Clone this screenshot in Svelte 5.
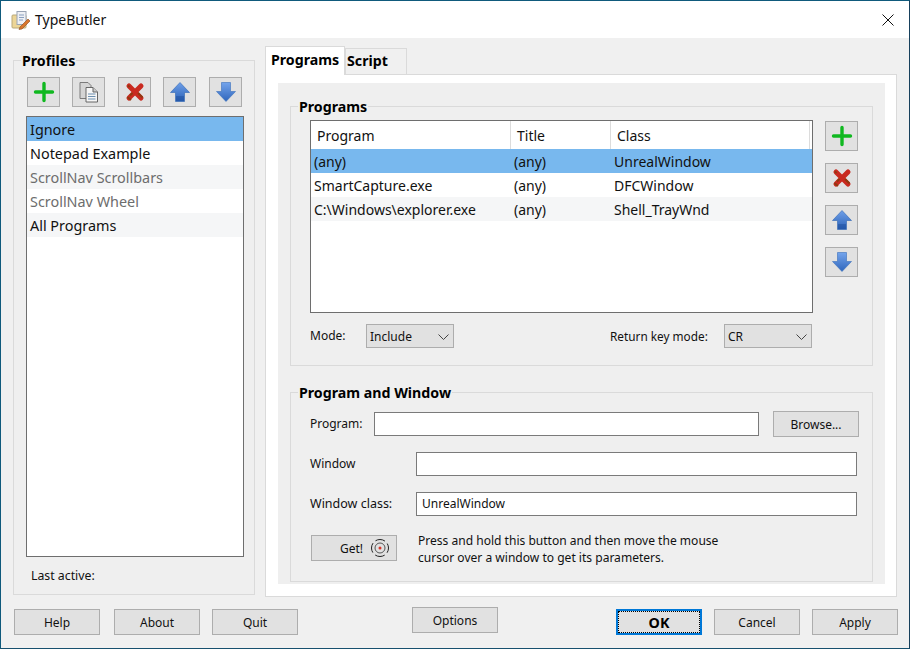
<script>
  const profiles = [
    { n: 'Ignore', c: 'sel' },
    { n: 'Notepad Example', c: '' },
    { n: 'ScrollNav Scrollbars', c: 'alt dim' },
    { n: 'ScrollNav Wheel', c: 'dim' },
    { n: 'All Programs', c: 'alt' }
  ];
  const programs = [
    { p: '(any)', t: '(any)', k: 'UnrealWindow', c: 'sel' },
    { p: 'SmartCapture.exe', t: '(any)', k: 'DFCWindow', c: '' },
    { p: 'C:\\Windows\\explorer.exe', t: '(any)', k: 'Shell_TrayWnd', c: 'alt' }
  ];
</script>

{#snippet plus()}
  <svg width="24" height="24" viewBox="0 0 24 24"><path d="M12 3.500v17M3.500 12h17" stroke="#10b820" stroke-width="3.400" stroke-linecap="round" fill="none"/></svg>
{/snippet}
{#snippet cross()}
  <svg width="24" height="24" viewBox="0 0 24 24"><path d="M6 6l12 12M18 6L6 18" stroke="#c92a20" stroke-width="5" stroke-linecap="round" fill="none"/><path d="M4.500 17l3.500 3M15 13l4.500 4.500M9.500 13l-2.500 2.500M5 5.500l1.500 1.500" stroke="#8f3a10" stroke-width="1.800" fill="none"/></svg>
{/snippet}
{#snippet up()}
  <svg width="24" height="24" viewBox="0 0 24 24"><defs><linearGradient id="gu" x1="0" y1="0" x2="0" y2="1"><stop offset="0" stop-color="#6f9fe8"/><stop offset="1" stop-color="#2a62b8"/></linearGradient></defs><path d="M12 2.500L21.500 12.500H16.500V21.500H7.500V12.500H2.500Z" fill="url(#gu)" stroke="#2f66b4" stroke-width=".6"/><path d="M9 16v5M11 16v5M13 16v5M15 16v5" stroke="#1f4f9c" stroke-width="1"/></svg>
{/snippet}
{#snippet down()}
  <svg width="24" height="24" viewBox="0 0 24 24"><defs><linearGradient id="gd" x1="0" y1="0" x2="0" y2="1"><stop offset="0" stop-color="#74a4ec"/><stop offset="1" stop-color="#2f66bc"/></linearGradient></defs><path d="M12 21.500L21.500 11.500H16.500V2.500H7.500V11.500H2.500Z" fill="url(#gd)" stroke="#3a70bc" stroke-width=".6"/></svg>
{/snippet}
{#snippet copy()}
  <svg width="24" height="24" viewBox="0 0 24 24"><path d="M3 2.500h8l3 3v13H3Z" fill="#d4d4d4" stroke="#7a7a7a"/><path d="M9 7.500h7l4.500 4.500v10H9Z" fill="#f6f6f6" stroke="#666"/><path d="M16 7.500v4.500h4.500" fill="#ccc" stroke="#666"/><path d="M11 14h7.500M11 16.500h7.500M11 19h7.500" stroke="#6c8fb0"/></svg>
{/snippet}

<div class="win">
  <header class="title">
    <svg class="appicon" width="20" height="20" viewBox="0 0 20 20">
      <rect x="1" y="5" width="14" height="13" rx="1" fill="#ecd596" stroke="#b9a878"/>
      <rect x="6" y="1.500" width="9" height="13" fill="#eef0f4" stroke="#9aa4b4"/>
      <path d="M8 5h5M8 7.500h5M8 10h4" stroke="#8aa0c0"/>
      <path d="M9 17l8-8 2 2-8 8-3 .5Z" fill="#d9772e" stroke="#8c4a1c" stroke-width=".6"/>
    </svg>
    <span class="apptitle">TypeButler</span>
    <svg class="close" width="12" height="12" viewBox="0 0 12 12"><path d="M.5.500l11 11M11.500.500l-11 11" stroke="#111" stroke-width="1" fill="none"/></svg>
  </header>

  <div class="main">
    <section class="group profiles">
      <div class="legend">Profiles</div>
      <div class="toolbar">
        <button class="ico">{@render plus()}</button>
        <button class="ico">{@render copy()}</button>
        <button class="ico">{@render cross()}</button>
        <button class="ico">{@render up()}</button>
        <button class="ico">{@render down()}</button>
      </div>
      <div class="list">
        {#each profiles as r}
          <div class="prow {r.c}">{r.n}</div>
        {/each}
      </div>
      <div class="last">Last active:</div>
    </section>

    <div class="right">
      <div class="tabs">
        <div class="tab on">Programs</div>
        <div class="tab">Script</div>
      </div>
      <div class="page">
        <div class="inner">
          <section class="group prog">
            <div class="legend">Programs</div>
            <div class="tablewrap">
              <div class="table">
                <div class="thead">
                  <div class="th w1">Program</div>
                  <div class="th w2">Title</div>
                  <div class="th w3">Class</div>
                </div>
                {#each programs as r}
                  <div class="trow {r.c}">
                    <div class="w1">{r.p}</div>
                    <div class="w2">{r.t}</div>
                    <div class="w3">{r.k}</div>
                  </div>
                {/each}
              </div>
              <div class="side">
                <button class="ico">{@render plus()}</button>
                <button class="ico">{@render cross()}</button>
                <button class="ico">{@render up()}</button>
                <button class="ico">{@render down()}</button>
              </div>
            </div>
            <div class="modes">
              <span class="lab modelab">Mode:</span>
              <div class="select">Include<svg width="11" height="6" viewBox="0 0 11 6"><path d="M.5.500l5 5 5-5" stroke="#444" fill="none"/></svg></div>
              <span class="lab retlab">Return key mode:</span>
              <div class="select">CR<svg width="11" height="6" viewBox="0 0 11 6"><path d="M.5.500l5 5 5-5" stroke="#444" fill="none"/></svg></div>
            </div>
          </section>

          <section class="group pw">
            <div class="legend">Program and Window</div>
            <div class="line first">
              <span class="lab l1">Program:</span>
              <div class="input i1"></div>
              <button class="btn browse">Browse...</button>
            </div>
            <div class="line">
              <span class="lab l2">Window</span>
              <div class="input i2"></div>
            </div>
            <div class="line">
              <span class="lab l2 wc">Window class:</span>
              <div class="input i2">UnrealWindow</div>
            </div>
            <div class="getline">
              <button class="btn get">Get!
                <svg width="20" height="20" viewBox="0 0 20 20"><circle cx="10" cy="10" r="8.500" fill="none" stroke="#222" stroke-dasharray="10 3.350" stroke-dashoffset="5"/><circle cx="10" cy="10" r="5" fill="none" stroke="#555"/><circle cx="10" cy="10" r="1.500" fill="#d8362a"/></svg>
              </button>
              <p class="hint">Press and hold this button and then move the mouse<br>cursor over a window to get its parameters.</p>
            </div>
          </section>
        </div>
      </div>
    </div>
  </div>

  <footer class="foot">
    <button class="btn">Help</button>
    <button class="btn about">About</button>
    <button class="btn quit">Quit</button>
    <button class="btn options">Options</button>
    <button class="btn ok"><span>OK</span></button>
    <button class="btn">Cancel</button>
    <button class="btn">Apply</button>
  </footer>
</div>

<style>
  :global(body) { margin: 0; background: #f0f0f0; }
  .win {
    width: 910px; height: 649px; box-sizing: border-box;
    border: 1px solid #0f5a7c; border-right-color: #17405c; border-bottom-color: #17506e;
    background: #f0f0f0; display: flex; flex-direction: column;
    font-family: "Noto Sans", sans-serif; font-size: 12px; color: #111; overflow: hidden;
  }
  .title { height: 37px; background: #fff; display: flex; align-items: center; flex: none; }
  .appicon { margin-left: 10px; }
  .apptitle { margin-left: 4px; font-size: 14px; color: #111; }
  .close { margin-left: auto; margin-right: 15px; }
  .main { flex: none; display: flex; padding: 22px 12px 0 12px; height: 558px; box-sizing: border-box; }
  .group { border: 1px solid #dadada; background: #efefef; box-sizing: border-box; }
  .legend {
    font-weight: 700; font-size: 14.200px; line-height: 18px; color: #000;
    width: max-content; background: #efefef; margin: -9px 0 0 -5px; padding: 0 1px;
  }
  .profiles { width: 242px; height: 535px; padding: 0 0 0 12px; flex: none; }
  .toolbar { display: flex; gap: 12px; margin: 7px 0 0 1px; }
  .toolbar .ico:nth-child(3), .toolbar .ico:nth-child(5) { margin-left: 1px; }
  .ico {
    width: 33px; height: 30px; box-sizing: border-box; padding: 0; background: #e1e1e1;
    border: 1px solid #adadad; display: flex; align-items: center; justify-content: center; flex: none;
  }
  .ico svg { display: block; filter: blur(.3px); }
  .list { width: 218px; height: 441px; box-sizing: border-box; margin-top: 9px; background: #fff; border: 1px solid #6e6e6e; }
  .prow { height: 24px; line-height: 26px; padding-left: 3px; font-size: 14.400px; color: #111; }
  .sel { background: #78b8ee; }
  .alt { background: #f5f6f7; }
  .dim { color: #6d6d6d !important; }
  .last { margin: 10px 0 0 5px; font-size: 12.300px; line-height: 18px; }
  .right { margin-left: 10px; width: 632px; display: flex; flex-direction: column; margin-top: -15px; }
  .tabs { display: flex; align-items: flex-end; height: 29px; flex: none; position: relative; z-index: 1; }
  .tab {
    width: 62px; height: 26px; box-sizing: border-box; border: 1px solid #dadada; border-bottom: none;
    background: #f0f0f0; font-weight: 700; font-size: 14.200px; line-height: 24px; padding-left: 1px; color: #000;
  }
  .tab.on { width: 80px; height: 29px; background: #fff; padding-left: 5px; line-height: 25px; margin-bottom: -1px; }
  .page { background: #fff; border: 1px solid #dadada; height: 523px; box-sizing: border-box; padding: 8px 11px 12px 12px; }
  .inner { background: #efefef; height: 501px; box-sizing: border-box; padding: 23px 12px 0 12px; }
  .prog { height: 260px; padding: 0 0 0 19px; }
  .prog .legend, .pw .legend { margin-left: -12px; }
  .tablewrap { display: flex; margin-top: 4px; }
  .table { width: 503px; height: 193px; box-sizing: border-box; background: #fff; border: 1px solid #6e6e6e; flex: none; }
  .thead { display: flex; height: 28px; background: #fff; }
  .th { line-height: 29px; border-right: 1px solid #dcdcdc; font-size: 14px; padding-left: 6px; box-sizing: border-box; }
  .trow { display: flex; height: 24px; line-height: 26px; font-size: 14px; }
  .trow .w1 { padding-left: 3px; }
  .trow .w2, .trow .w3 { padding-left: 3px; }
  .w1 { width: 200px; box-sizing: border-box; }
  .w2 { width: 100px; box-sizing: border-box; }
  .w3 { width: 199px; box-sizing: border-box; }
  .trow .w3 { width: 201px; }
  .side { margin: 1px 0 0 12px; display: flex; flex-direction: column; gap: 12px; }
  .modes { display: flex; align-items: center; margin-top: 11px; }
  .lab { font-size: 12px; line-height: 18px; }
  .modelab { width: 56px; }
  .retlab { margin-left: 156px; width: 114px; font-size: 11.800px; }
  .select {
    width: 88px; height: 24px; box-sizing: border-box; background: #e1e1e1; border: 1px solid #adadad;
    padding: 1px 4px 0 3px; display: flex; align-items: center; justify-content: space-between; line-height: 22px;
  }
  .pw { height: 190px; margin-top: 26px; padding-left: 19px; }
  .line { display: flex; align-items: center; height: 24px; margin-top: 16px; }
  .line.first { margin-top: 10px; }
  .l1 { width: 64px; }
  .l2 { width: 106px; }
  .wc { font-size: 12.500px; }
  .input { height: 24px; box-sizing: border-box; background: #fff; border: 1px solid #7a7a7a; line-height: 22px; padding-left: 5px; }
  .i1 { width: 385px; }
  .i2 { width: 441px; }
  .btn {
    width: 86px; height: 26px; box-sizing: border-box; padding: 0; background: #e1e1e1; border: 1px solid #adadad;
    font: inherit; color: #111; flex: none;
  }
  .browse { margin-left: 14px; }
  .getline { display: flex; margin-top: 16px; margin-left: 1px; }
  .get { display: flex; align-items: center; justify-content: flex-end; gap: 7px; padding-right: 6px; margin-top: 3px; }
  .hint { margin: 0 0 0 21px; line-height: 17px; font-size: 12.050px; }
  .foot { flex: none; display: flex; padding: 13px 0 0 13px; align-items: flex-start; }
  .about { margin-left: 14px; }
  .quit { margin-left: 12px; }
  .options { margin-left: 114px; margin-top: -2px; }
  .ok { margin-left: 118px; margin-right: 12px; border: 2px solid #0078d7; font-weight: 700; font-size: 14.300px; color: #000; }
  .ok span { display: flex; align-items: center; justify-content: center; height: 100%; outline: 1px dotted #000; outline-offset: -1px; }
  .foot .btn:last-child { margin-left: 12px; }
</style>
